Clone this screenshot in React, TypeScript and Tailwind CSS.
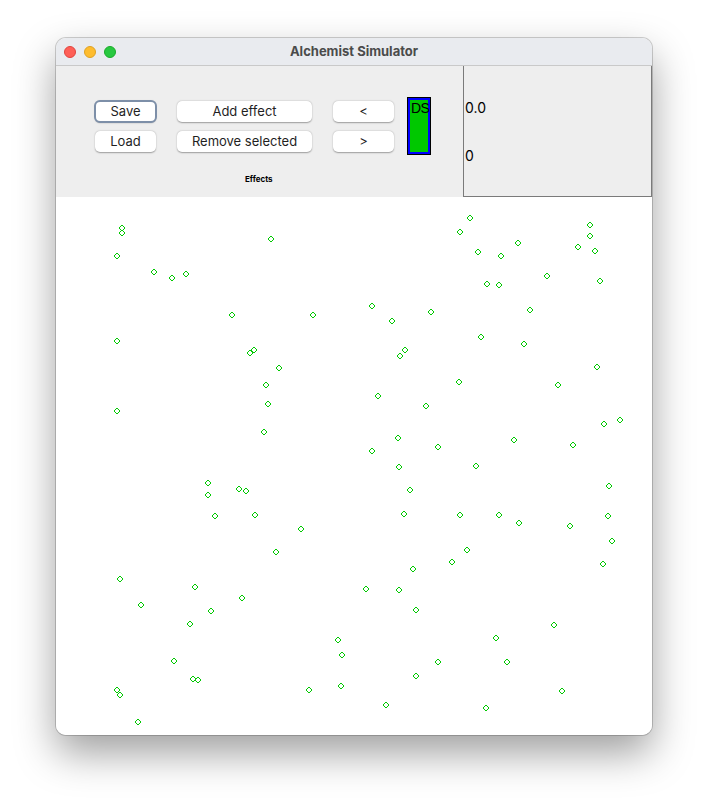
import React from 'react';

const dots: [number, number][] = [
  [122, 228], [122, 233], [117, 256], [271, 239], [154, 272], [172, 278], [186, 274],
  [470, 218], [460, 232], [478, 252], [501, 256], [518, 243], [590, 225], [590, 236],
  [578, 247], [595, 251], [547, 276], [487, 284], [499, 285], [600, 281], [232, 315],
  [313, 315], [372, 306], [392, 321], [431, 312], [530, 310], [117, 341], [250, 353],
  [254, 350], [279, 368], [400, 356], [405, 350], [481, 337], [524, 344], [266, 385],
  [597, 367], [459, 382], [558, 385], [117, 411], [268, 404], [378, 396], [426, 406],
  [264, 432], [604, 424], [620, 420], [398, 438], [514, 440], [573, 445], [372, 451],
  [438, 447], [399, 467], [476, 466], [208, 483], [208, 495], [239, 489], [246, 491],
  [410, 490], [609, 486], [215, 516], [255, 515], [404, 514], [460, 515], [499, 515],
  [519, 523], [570, 526], [608, 516], [301, 529], [276, 552], [467, 550], [452, 562],
  [612, 541], [603, 564], [120, 579], [413, 569], [195, 587], [366, 589], [399, 590],
  [242, 598], [141, 605], [211, 611], [416, 610], [190, 624], [554, 625], [338, 640],
  [496, 638], [342, 655], [174, 661], [438, 662], [507, 662], [193, 679], [198, 680],
  [416, 676], [117, 690], [120, 695], [309, 690], [341, 686], [562, 691], [386, 705],
  [486, 708], [138, 722],
];

// 6x6 oval outline, pixel by pixel
const ring: [number, number][] = [
  [2, 0], [3, 0], [1, 1], [4, 1], [0, 2], [5, 2], [0, 3], [5, 3], [1, 4], [4, 4], [2, 5], [3, 5],
];

const dotPath = dots
  .map(([x, y]) => {
    const ox = x - 56 - 3;
    const oy = y - 197 - 3;
    return ring.map(([dx, dy]) => `M${ox + dx} ${oy + dy}h1v1h-1z`).join('');
  })
  .join('');

function Btn({ label, focused, w }: { label: string; focused?: boolean; w: string }) {
  return (
    <button
      className={
        'h-[21px] rounded-[5px] bg-white text-[13px] leading-none text-[#1f1f1f] shadow-[0_0.5px_1.5px_rgba(0,0,0,0.35)] ' +
        w +
        (focused ? ' outline outline-[2.5px] outline-[#7d8fa8] outline-offset-[-1px]' : '')
      }
    >
      {label}
    </button>
  );
}

export default function App() {
  return (
    <div className="min-h-[809px] w-[708px] bg-white pt-[38px] pl-[56px] font-['Inter','Liberation_Sans',sans-serif]">
      <div className="w-[596px] h-[697px] rounded-[10px] overflow-hidden flex flex-col bg-white shadow-[0_18px_40px_rgba(0,0,0,0.38),0_0_0_1px_rgba(0,0,0,0.18)]">
        {/* title bar */}
        <div className="h-[28px] bg-[#e9ebef] border-b border-[#c9c9c9] flex items-center relative shrink-0">
          <div className="flex gap-[8px] pl-[8px]">
            <span className="w-[12px] h-[12px] rounded-full bg-[#fe5f57] border border-[#e0443e]" />
            <span className="w-[12px] h-[12px] rounded-full bg-[#febc2e] border border-[#dea123]" />
            <span className="w-[12px] h-[12px] rounded-full bg-[#28c840] border border-[#1aab29]" />
          </div>
          <div className="absolute inset-0 flex items-center justify-center text-[13px] font-bold text-[#4b4b4b]">
            Alchemist Simulator
          </div>
        </div>

        {/* toolbar */}
        <div className="h-[131px] bg-[#eeeeee] flex shrink-0">
          <div className="w-[407px] flex flex-col">
            <div className="flex pt-[35px] pl-[39px]">
              <div className="flex flex-col gap-[9px]">
                <Btn label="Save" focused w="w-[61px]" />
                <Btn label="Load" w="w-[61px]" />
              </div>
              <div className="flex flex-col gap-[9px] ml-[21px]">
                <Btn label="Add effect" w="w-[135px]" />
                <Btn label="Remove selected" w="w-[135px]" />
              </div>
              <div className="flex flex-col gap-[9px] ml-[21px]">
                <Btn label="<" w="w-[61px]" />
                <Btn label=">" w="w-[61px]" />
              </div>
              <div className="ml-[13px] -mt-[4px] w-[24px] h-[58px] border border-black">
                <div className="w-full h-full border-2 border-[#0000ff] bg-[#00c800] text-[14px] leading-[16px] text-black tracking-[-0.5px] pl-[1px] font-['Liberation_Sans',sans-serif]">
                  DS
                </div>
              </div>
            </div>
            <div className="pl-[189px] pt-[20px] text-[8px] font-bold text-black leading-none">Effects</div>
          </div>
          <div className="w-[189px] -mt-[1px] border border-[#7a7a7a] bg-[#eeeeee] flex flex-col pl-[1px] text-[14px] text-black">
            <div className="pt-[34px] leading-[16px]">0.0</div>
            <div className="pt-[32px] leading-[16px]">0</div>
          </div>
        </div>

        {/* canvas */}
        <div className="relative flex-1 bg-white">
          <svg className="absolute inset-0" width="596" height="538" viewBox="0 0 596 538" shapeRendering="crispEdges">
            <path d={dotPath} fill="#00c800" />
          </svg>
        </div>
      </div>
    </div>
  );
}
